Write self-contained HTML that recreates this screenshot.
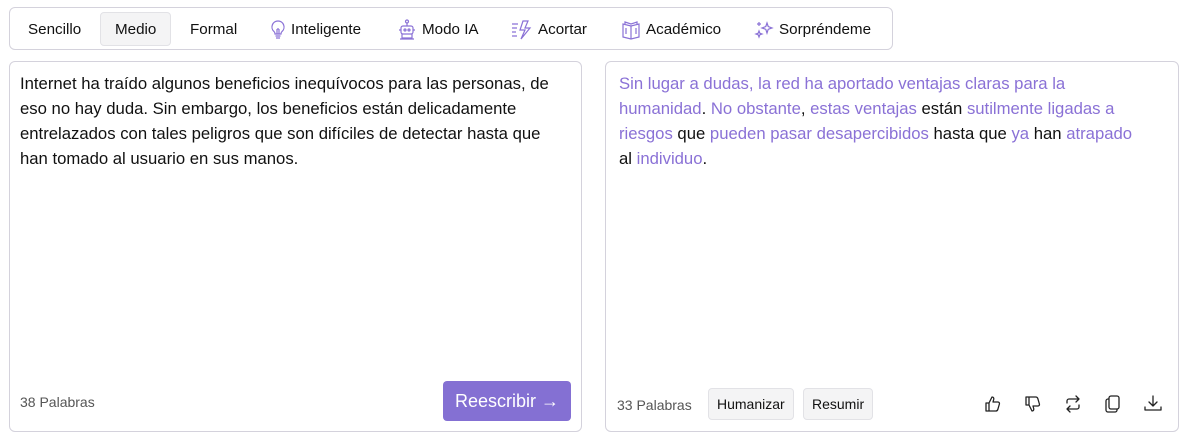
<!DOCTYPE html>
<html><head><meta charset="utf-8"><style>
*{box-sizing:border-box;margin:0;padding:0}
body{width:1188px;height:443px;background:#fff;font-family:"Liberation Sans",Arial,sans-serif;color:#111;position:relative;overflow:hidden}
.tb{position:absolute;left:9px;top:7px;width:884px;height:43px;border:1px solid #d4d2dc;border-radius:6px}
.t{position:absolute;top:13px;height:33px;line-height:33px;font-size:15.2px;color:#111;display:flex;align-items:center;gap:5px}
.t.sel{background:#f4f4f5;border:1px solid #e2e2e6;border-radius:4px;padding:0 14px;top:12px;height:34px}
.p{position:absolute;top:61px;height:371px;border:1px solid #d4d2dc;border-radius:6px}
.txt{position:absolute;left:10px;top:9px;font-size:16.7px;line-height:25px;white-space:nowrap}
.pu{color:#8a71d6}
.wc{position:absolute;font-size:14px;color:#555}
.btn{position:absolute;left:443px;top:381px;width:128px;height:40px;background:#8470d3;border-radius:4px;color:#fff;font-size:18px;line-height:40px;text-align:center}
.sb{position:absolute;top:388px;height:32px;line-height:30px;background:#f4f4f5;border:1px solid #e2e2e6;border-radius:4px;font-size:14px;padding:0 8px;color:#111}
svg{display:block}
.ic{position:absolute;top:395px}
</style></head><body>
<div class="tb"></div>
<div class="t" style="left:28px">Sencillo</div>
<div class="t sel" style="left:100px">Medio</div>
<div class="t" style="left:190px">Formal</div>
<div class="t" style="left:270px"><svg width="16" height="20" viewBox="0 0 16 20" fill="none" stroke="#8a71d6" stroke-width="1.2"><path d="M8 1a6 6 0 0 0-4 10.5c.8.8 1 1.5 1 2.5h6c0-1 .2-1.7 1-2.5A6 6 0 0 0 8 1z"/><path d="M5.5 16h5M6 18h4M7 14V9M9 14V9M7 9h2"/></svg>Inteligente</div>
<div class="t" style="left:397px"><svg width="20" height="22" viewBox="0 0 20 22" fill="none" stroke="#8a71d6" stroke-width="1.2"><circle cx="10" cy="2.5" r="1.5"/><path d="M10 4v3"/><rect x="4" y="7" width="12" height="8" rx="2"/><circle cx="8" cy="11" r="1"/><circle cx="12" cy="11" r="1"/><path d="M2 11h2M16 11h2M5 15v4h10v-4M3 20h14"/></svg>Modo IA</div>
<div class="t" style="left:511px"><svg width="22" height="20" viewBox="0 0 22 20" fill="none" stroke="#8a71d6" stroke-width="1.2"><path d="M12 1l-3 9h5l-4 9 9-11h-5l3-7z"/><path d="M1 4h6M1 8h5M1 12h4M1 16h5"/></svg>Acortar</div>
<div class="t" style="left:621px"><svg width="20" height="20" viewBox="0 0 20 20" fill="none" stroke="#8a71d6" stroke-width="1.2"><path d="M2 4v13l8 2 8-2V4l-8 2z"/><path d="M10 6v13M4 4V2l6 2 6-2v2"/><path d="M5 8v6M15 8v6"/></svg>Académico</div>
<div class="t" style="left:754px"><svg width="20" height="20" viewBox="0 0 20 20" fill="none" stroke="#8a71d6" stroke-width="1.2"><path d="M13 3l1.2 3.5L18 8l-3.8 1.3L13 13l-1.2-3.7L8 8l3.8-1.5z"/><path d="M5 11l.8 2.2L8 14l-2.2.8L5 17l-.8-2.2L2 14l2.2-.8zM5 2v4M3 4h4"/></svg>Sorpréndeme</div>

<div class="p" style="left:9px;width:573px">
<div class="txt">Internet ha traído algunos beneficios inequívocos para las personas, de<br>eso no hay duda. Sin embargo, los beneficios están delicadamente<br>entrelazados con tales peligros que son difíciles de detectar hasta que<br>han tomado al usuario en sus manos.</div>
</div>
<div class="wc" style="left:20px;top:394px">38 Palabras</div>
<div class="btn">Reescribir →</div>

<div class="p" style="left:605px;width:574px">
<div class="txt" style="left:13px"><span class="pu">Sin lugar a dudas, la red ha aportado ventajas claras para la</span><br><span class="pu">humanidad</span>. <span class="pu">No obstante</span>, <span class="pu">estas ventajas</span> están <span class="pu">sutilmente ligadas a</span><br><span class="pu">riesgos</span> que <span class="pu">pueden pasar desapercibidos</span> hasta que <span class="pu">ya</span> han <span class="pu">atrapado</span><br>al <span class="pu">individuo</span>.</div>
</div>
<div class="wc" style="left:617px;top:397px">33 Palabras</div>
<div class="sb" style="left:708px">Humanizar</div>
<div class="sb" style="left:803px">Resumir</div>
<svg class="ic" style="left:984px" width="18" height="18" viewBox="0 0 18 18" fill="none" stroke="#222" stroke-width="1.3" stroke-linejoin="round"><path d="M2 8h3v8H2zM5 8l3-6c1.5 0 2 1 1.7 2.5L9 7h5c1 0 1.7 1 1.4 2l-1.6 5.5c-.3.9-1 1.5-2 1.5H5"/></svg>
<svg class="ic" style="left:1024px" width="18" height="18" viewBox="0 0 18 18" fill="none" stroke="#222" stroke-width="1.3" stroke-linejoin="round"><path d="M2 2h3v8H2zM5 10l3 6c1.5 0 2-1 1.7-2.5L9 11h5c1 0 1.7-1 1.4-2l-1.6-5.5C13.5 2.6 12.8 2 11.8 2H5"/></svg>
<svg class="ic" style="left:1064px" width="18" height="18" viewBox="0 0 18 18" fill="none" stroke="#222" stroke-width="1.3" stroke-linecap="round" stroke-linejoin="round"><path d="M3 8V6c0-1 .7-2 2-2h10M12 1l3 3-3 3M15 10v2c0 1-.7 2-2 2H3M6 17l-3-3 3-3"/></svg>
<svg class="ic" style="left:1104px" width="18" height="18" viewBox="0 0 18 18" fill="none" stroke="#222" stroke-width="1.3" stroke-linejoin="round"><rect x="5" y="1" width="10" height="13" rx="2"/><path d="M5 4H4a2 2 0 0 0-2 2v9a2 2 0 0 0 2 2h7a2 2 0 0 0 2-2v-1"/></svg>
<svg class="ic" style="left:1144px" width="18" height="18" viewBox="0 0 18 18" fill="none" stroke="#222" stroke-width="1.3" stroke-linecap="round" stroke-linejoin="round"><path d="M9 1v10M5 7l4 4 4-4M1 12v3h16v-3"/></svg>
</body></html>
